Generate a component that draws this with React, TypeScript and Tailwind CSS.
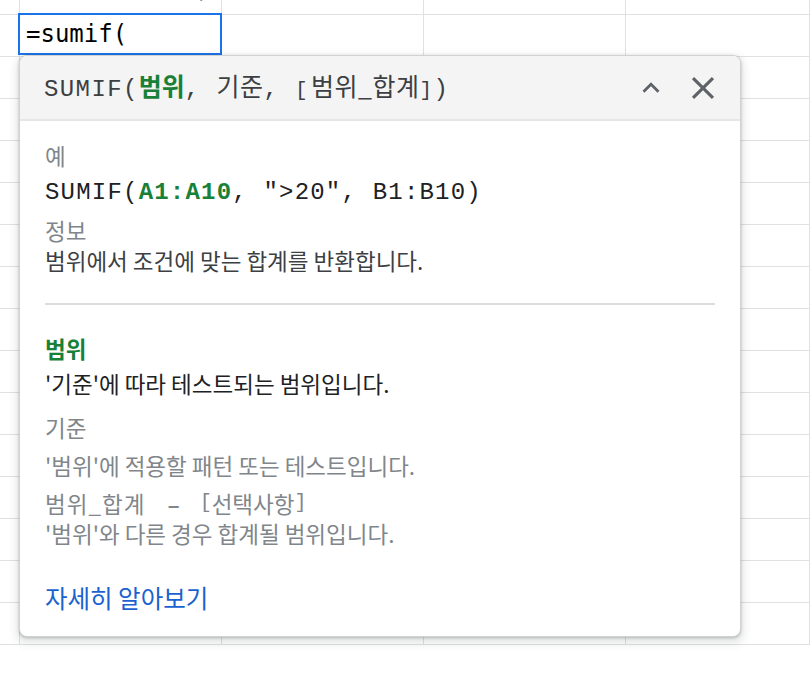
import React from 'react';

const ROWS = 16;
const COLS = ['w-[20px]', 'w-[202px]', 'w-[202px]', 'w-[202px]', 'flex-1'];

const mono = "font-['Liberation_Mono','Noto_Sans_CJK_KR',monospace]";
const ko = "font-['Noto_Sans_CJK_KR',sans-serif]";

function SheetGrid() {
  return (
    <div className="flex flex-col">
      {Array.from({ length: ROWS }).map((_, r) => (
        <div key={r} className={`flex ${r === 0 ? 'h-[15px]' : 'h-[42px]'}`}>
          {COLS.map((w, c) => (
            <div key={c} className={`${w} h-full border-r border-b border-[#e1e1e1] overflow-hidden`}>
              {r === 0 && c === 1 && (
                <div className="-mt-[23px] pl-[176px] font-['DejaVu_Sans_Mono',monospace] text-[24px] leading-[25px] text-[#202124]">
                  )
                </div>
              )}
            </div>
          ))}
        </div>
      ))}
    </div>
  );
}

function ChevronUp() {
  return (
    <svg width="34" height="34" viewBox="0 0 24 24" fill="#5f6368">
      <path d="M12 8l-6 6 1.41 1.41L12 10.83l4.59 4.58L18 14z" />
    </svg>
  );
}

function CloseIcon() {
  return (
    <svg width="38" height="38" viewBox="0 0 24 24" fill="#5f6368">
      <path d="M19 6.41L17.59 5 12 10.59 6.41 5 5 6.41 10.59 12 5 17.59 6.41 19 12 13.41 17.59 19 19 17.59 13.41 12z" />
    </svg>
  );
}

function FormulaHelp() {
  return (
    <div className="absolute left-[19px] top-[55px] w-[722px] rounded-[8px] border border-[#d2d2d2] bg-white shadow-[0_1px_3px_rgba(60,64,67,0.3),0_4px_8px_3px_rgba(60,64,67,0.12)] overflow-hidden">
      {/* header: signature + controls */}
      <div className="h-[65px] flex items-center justify-between bg-[#f4f4f4] border-b-2 border-[#e6e6e6] pl-[24px] pr-[18px]">
        <div className={`${mono} text-[24px] tracking-[1.4px] text-[#3c4043] whitespace-pre`}>
          SUMIF(
          <span className={`${ko} text-[25px] tracking-[0px] font-bold text-[#188038]`}>범위</span>
          {', '}
          <span className={`${ko} text-[25px] tracking-[0.5px]`}>기준</span>
          {', '}
          <span className="text-[21px] mr-[2px]">[</span>
          <span className={`${ko} text-[25px] tracking-[0.5px]`}>범위_합계</span>
          <span className="text-[21px]">]</span>
          {')'}
        </div>
        <div className="flex items-center gap-[16px]">
          <ChevronUp />
          <CloseIcon />
        </div>
      </div>

      <div className={`${ko} px-[25px] pt-[20px] pb-[24px] text-[22.5px] leading-[28px]`}>
        <div className="text-[#80868b]">예</div>
        <div className={`${mono} mt-[10px] text-[24px] tracking-[1.2px] text-[#202124] whitespace-pre`}>
          SUMIF(<span className="font-bold text-[#188038]">A1:A10</span>
          {', ">20", B1:B10)'}
        </div>
        <div className="mt-[9px] text-[#80868b]">정보</div>
        <div className="mt-[2px] text-[#3c4043]">범위에서 조건에 맞는 합계를 반환합니다.</div>

        <div className="mt-[29px] h-[2px] bg-[#dadce0]" />

        <div className="mt-[29px] font-bold text-[#188038]">범위</div>
        <div className="mt-[7px] text-[#202124]">'기준'에 따라 테스트되는 범위입니다.</div>

        <div className="mt-[16px] text-[#80868b]">기준</div>
        <div className="mt-[10px] text-[#80868b]">'범위'에 적용할 패턴 또는 테스트입니다.</div>

        <div className="mt-[10px] flex items-center text-[#80868b] whitespace-pre">
          <span className="tracking-[1px]">범위_합계</span>
          <span className="ml-[22px] mr-[20px] font-bold">–</span>
          <span className={`${mono} text-[20px]`}>[</span>
          <span>선택사항</span>
          <span className={`${mono} text-[20px]`}>]</span>
        </div>
        <div className="mt-[2px] text-[#80868b]">'범위'와 다른 경우 합계될 범위입니다.</div>

        <div className="mt-[37px] text-[24.5px] text-[#1a62d0]">자세히 알아보기</div>
      </div>
    </div>
  );
}

export default function App() {
  return (
    <div className="relative w-[810px] h-[680px] overflow-hidden bg-white">
      <SheetGrid />

      {/* active cell editor */}
      <div className="absolute left-[18px] top-[13px] w-[204px] h-[42px] border-2 border-[#1a73e8] bg-white flex items-center pl-[6px]">
        <span className="font-['DejaVu_Sans_Mono',monospace] text-[24px] leading-none text-[#000]">=sumif(</span>
      </div>

      <FormulaHelp />
    </div>
  );
}
